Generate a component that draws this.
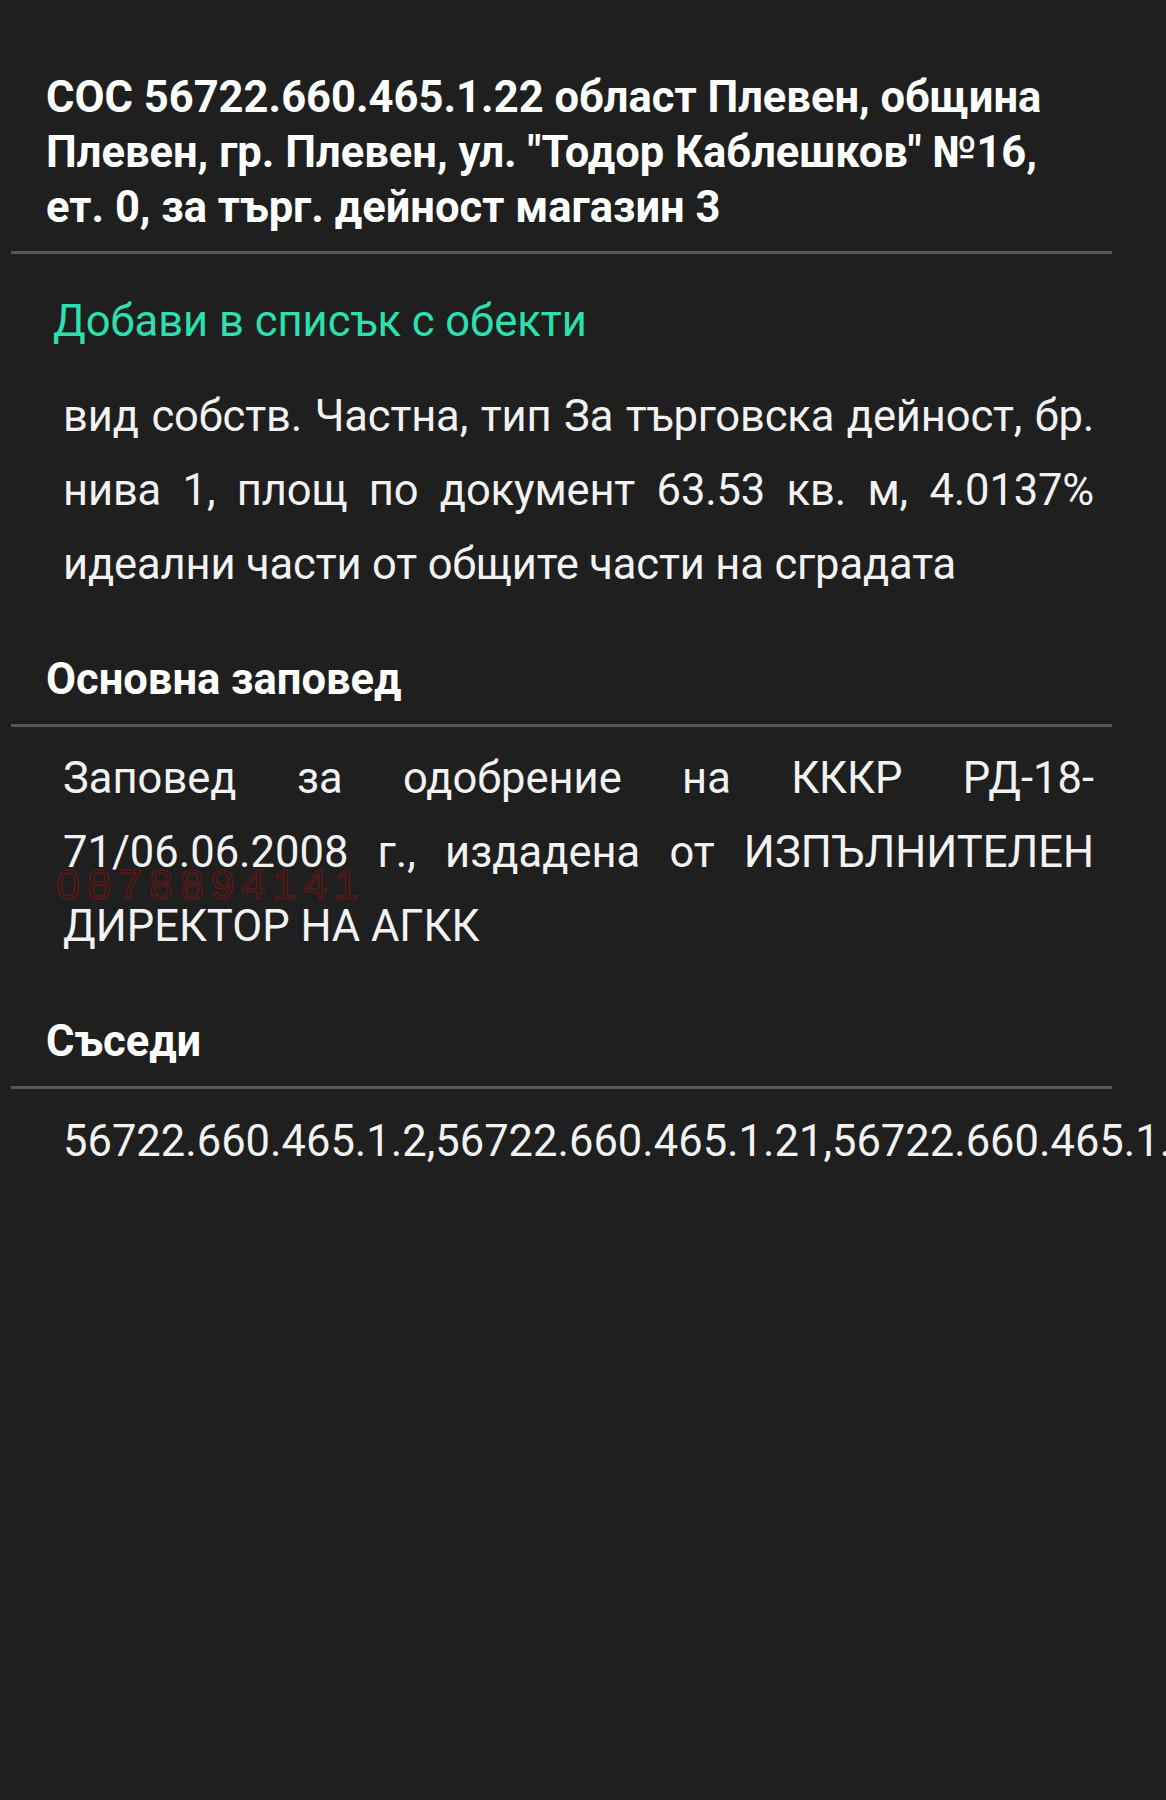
export default function App() {
  return (
    <div className="min-h-[1800px] w-full overflow-hidden bg-[#1f1f1f] font-['Roboto',sans-serif] text-white">
      {/* title */}
      <div className="pl-[46px] pr-[96px] pt-[70px] pb-[16px]">
        <h1 className="text-[43.5px] font-bold leading-[55px]">
          СОС 56722.660.465.1.22 област Плевен, община Плевен, гр. Плевен, ул. "Тодор Каблешков" №16, ет. 0, за търг. дейност магазин 3
        </h1>
      </div>
      <div className="mx-[11px] w-[1101px] h-[3px] bg-[#55565c]" />

      <div className="pl-[53px] pt-[46px]">
        <button className="text-[43.5px] leading-[44px] text-[#2de0b0]">Добави в списък с обекти</button>
      </div>

      <p className="pl-[63px] pr-[72px] pt-[36px] text-justify text-[43.5px] leading-[74px] tracking-[-0.15px] text-[#f2f2f2]">
        вид собств. Частна, тип За търговска дейност, бр. нива 1, площ по документ 63.53 кв. м, 4.0137% идеални части от общите части на сградата
      </p>

      {/* основна заповед */}
      <div className="pl-[46px] pt-[50px] pb-[17px]">
        <h2 className="text-[43.5px] font-bold leading-[55px]">Основна заповед</h2>
      </div>
      <div className="mx-[11px] w-[1101px] h-[3px] bg-[#55565c]" />

      <div className="relative pl-[63px] pr-[72px] pt-[15px]">
        <p className="text-justify text-[43.5px] leading-[74px] text-[#f2f2f2]">
          Заповед за одобрение на КККР РД-18-71/06.06.2008 г., издадена от ИЗПЪЛНИТЕЛЕН ДИРЕКТОР НА АГКК
        </p>
        <span className="pointer-events-none absolute left-[56px] top-[132px] font-['Liberation_Sans',sans-serif] text-[43px] leading-[50px] tracking-[7px] text-transparent [-webkit-text-stroke:1.2px_#6a1414]">
          0878894141
        </span>
      </div>

      {/* съседи */}
      <div className="pl-[46px] pt-[50px] pb-[17px]">
        <h2 className="text-[43.5px] font-bold leading-[55px]">Съседи</h2>
      </div>
      <div className="mx-[11px] w-[1101px] h-[3px] bg-[#55565c]" />

      <div className="pl-[63px] pt-[16px]">
        <p className="whitespace-nowrap text-[43.5px] leading-[74px] text-[#f2f2f2]">
          56722.660.465.1.2,56722.660.465.1.21,56722.660.465.1.23
        </p>
      </div>
    </div>
  );
}
